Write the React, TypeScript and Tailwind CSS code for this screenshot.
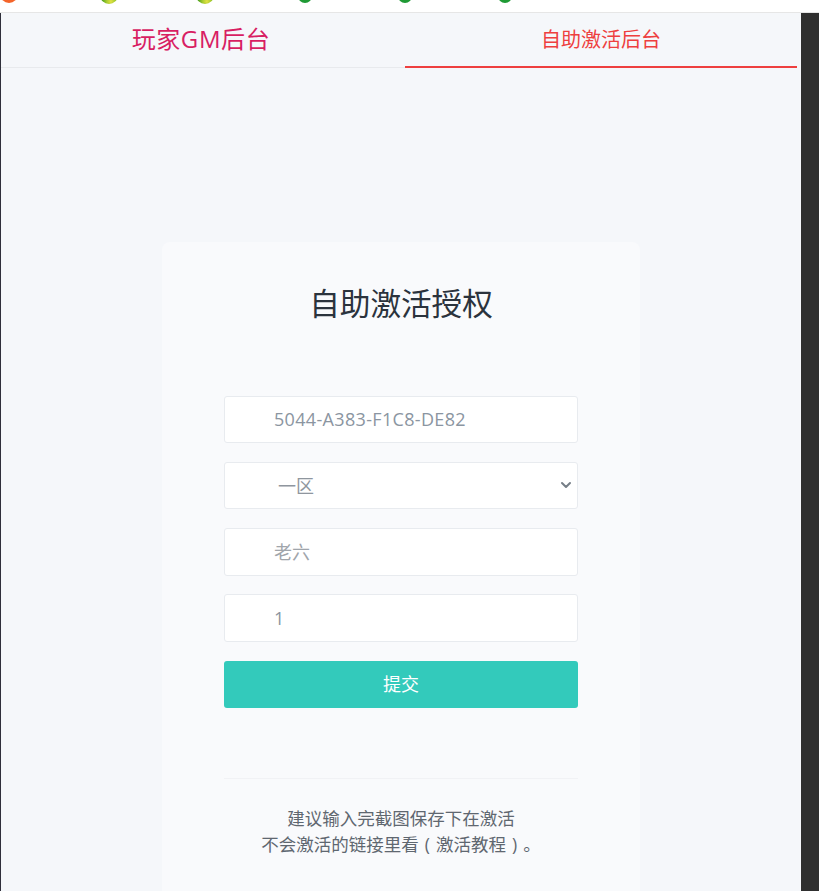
import { ChevronDown } from 'lucide-react';

const FONT = "font-['Open_Sans','Noto_Sans_CJK_SC',sans-serif]";

// Coloured dots cut off by the top edge
function TopDot({ kind }: { kind: 'orange' | 'lime' | 'green' }) {
  if (kind === 'orange') {
    return <span className="block h-[18px] w-[18px] -translate-y-[15px] rounded-full bg-[#f4642a]" />;
  }
  if (kind === 'lime') {
    return (
      <span className="block h-[18px] w-[18px] -translate-y-[14px] rounded-full bg-[radial-gradient(circle_at_60%_85%,#e4e244_0%,#a8cc30_22%,#3f9a1c_50%)]" />
    );
  }
  return <span className="block h-[14px] w-[14px] -translate-y-[11px] rounded-full bg-[#1f9a35]" />;
}

function Field({ value, className = '' }: { value: string; className?: string }) {
  return (
    <div className={`flex items-center rounded-[3px] border border-[#e8ebef] bg-white text-[18px] ${className}`}>
      {value}
    </div>
  );
}

export default function App() {
  return (
    <div className={`${FONT} flex h-[891px] flex-col overflow-hidden bg-white`}>
      {/* Top strip */}
      <div className="relative h-[13px] shrink-0 overflow-hidden border-b border-[#e6e6e6] bg-white">
        <div className="absolute left-0 top-0"><TopDot kind="orange" /></div>
        <div className="absolute left-[100px] top-0"><TopDot kind="lime" /></div>
        <div className="absolute left-[196px] top-0"><TopDot kind="lime" /></div>
        <div className="absolute left-[298px] top-0"><TopDot kind="green" /></div>
        <div className="absolute left-[398px] top-0"><TopDot kind="green" /></div>
        <div className="absolute left-[498px] top-0"><TopDot kind="green" /></div>
      </div>

      <div className="flex min-h-0 flex-1">
        <div className="w-px shrink-0 bg-[#2f2f3a]" />

        <div className="flex min-w-0 flex-1 flex-col bg-[#f5f7fa]">
          {/* Tabs */}
          <div className="flex h-[55px] shrink-0 pr-[4px]">
            <div className="flex w-[404px] items-center justify-center border-b border-[#e8eaed] pb-[3px] text-[24px] tracking-[0.6px] text-[#d81e63]">
              <span className="-translate-x-[2px]">玩家GM后台</span>
            </div>
            <div className="flex flex-1 items-center justify-center border-b-2 border-[#ee3f3f] text-[20px] text-[#ee3f3f]">
              自助激活后台
            </div>
          </div>

          {/* Card */}
          <div className="ml-[161px] mt-[174px] flex w-[478px] flex-1 flex-col rounded-t-[8px] bg-[#f9fafc] px-[62px]">
            <h1 className="mt-[38px] text-center text-[30.6px] font-normal leading-[46px] text-[#2b333d]">自助激活授权</h1>

            <div className="mt-[70px] flex flex-col gap-[18px]">
              <Field value="5044-A383-F1C8-DE82" className="mb-[1px] h-[47px] pb-[1px] pl-[49px] tracking-[0.33px] text-[#8b95a1]" />
              <div className="relative mb-[1px]">
                <Field value="一区" className="h-[47px] pl-[53px] pt-[2px] text-[#8f969e]" />
                <ChevronDown size={16} strokeWidth={3} className="absolute right-[4px] top-[15px] text-[#767e87]" />
              </div>
              <Field value="老六" className="h-[48px] pl-[49px] text-[#a0a5ab]" />
              <Field value="1" className="h-[48px] pl-[49px] text-[#8b95a1]" />
            </div>

            <button className="mt-[19px] h-[47px] rounded-[3px] bg-[#33cabb] text-[18px] text-white">提交</button>

            <div className="mt-[70px] border-t border-[#f1f2f5] pt-[26px] text-center text-[17.5px] leading-[26px] text-[#5f6770]">
              <p>建议输入完截图保存下在激活</p>
              <p className="[word-spacing:1.5px]">不会激活的链接里看 ( 激活教程 ) 。</p>
            </div>
          </div>
        </div>

        <div className="w-[18px] shrink-0 bg-[#2f2f2f]" />
      </div>
    </div>
  );
}
